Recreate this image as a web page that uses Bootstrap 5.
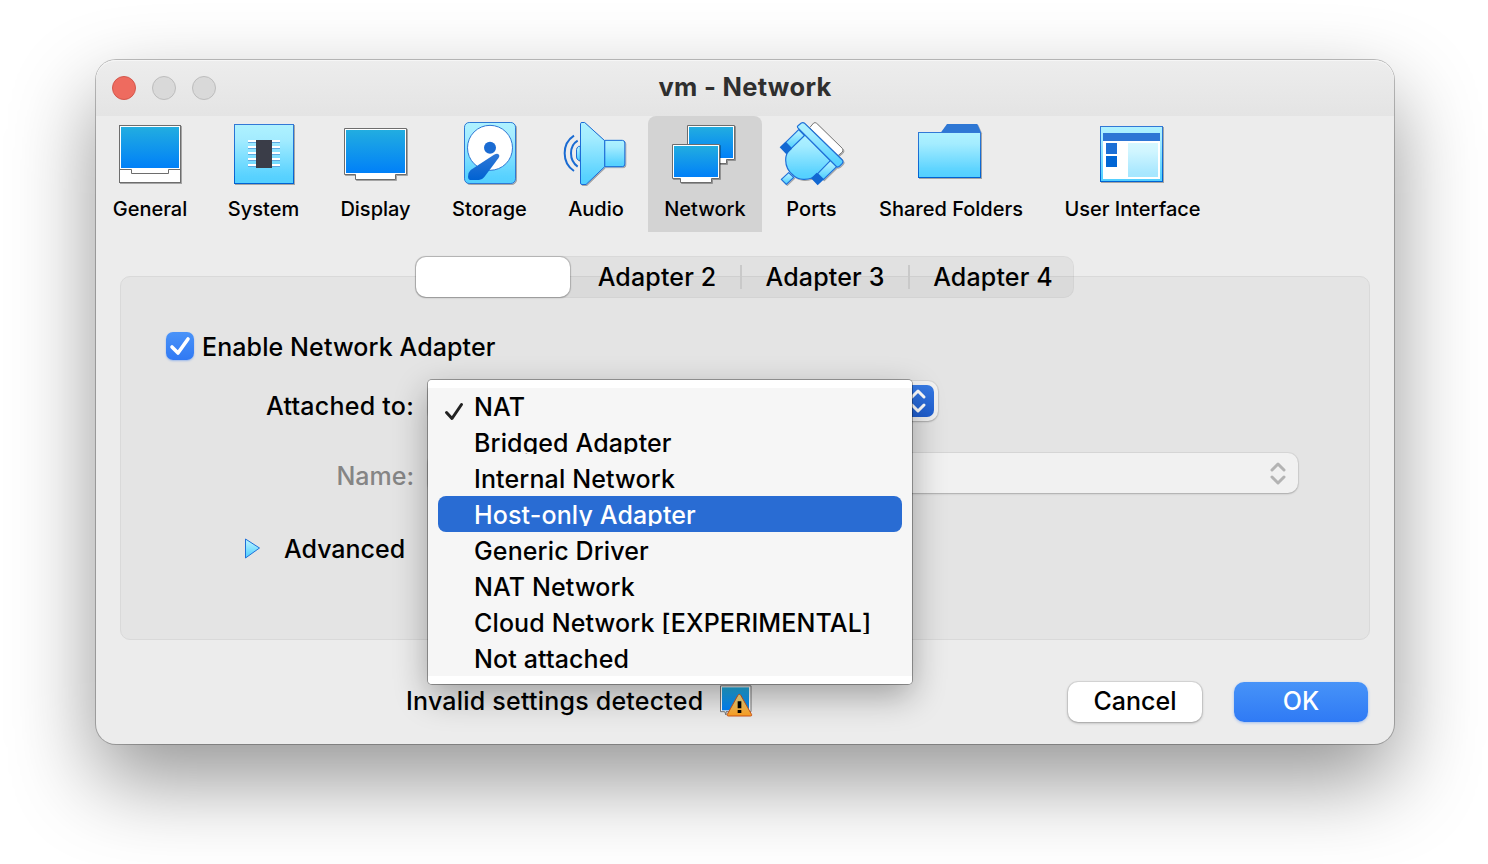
<!DOCTYPE html>
<html lang="en">
<head>
<meta charset="utf-8">
<meta name="viewport" content="width=device-width, initial-scale=1">
<title>vm - Network</title>
<link href="https://cdn.jsdelivr.net/npm/bootstrap@5.3.0/dist/css/bootstrap.min.css" rel="stylesheet">
<style>
  body { font-family: Inter, "Liberation Sans", sans-serif; font-size: 25px; font-weight: 500; line-height: 36px; color: #000; background: #fff; height: 864px; overflow: hidden; padding: 60px 94px 0 96px; }
  svg { display: block; overflow: visible; }
  .win { height: 684px; border-radius: 20px; background: #ececec; box-shadow: 0 0 0 1px rgba(0,0,0,.24), 0 36px 84px rgba(0,0,0,.42); }
  .titlebar { height: 56px; border-radius: 20px 20px 0 0; background: linear-gradient(#ededed, #e4e4e4); box-shadow: inset 0 1px 0 #f6f6f6; padding-left: 16px; }
  .lights { gap: 16px; }
  .light { width: 24px; height: 24px; border-radius: 50%; background: #d9d9d9; border: 1px solid #bdbdbd; }
  .light.close-dot { background: #ee6b5f; border-color: #d3574c; }
  .win-title { color: #2f2f2f; font-weight: 700; font-size: 25.500px; letter-spacing: .3px; line-height: 54px; }
  .tools { display: grid; grid-template-columns: 108px 105px 105px 109px 90px 114px 85px 180px 169px; column-gap: 7px; height: 116px; font-size: 20px; line-height: 26px; }
  .tool { padding-top: 6px; border-radius: 8px 8px 0 0; white-space: nowrap; }
  .tool.active { background: #d3d3d3; }
  .tool span { margin-top: 10px; }
  .pane-wrap { padding: 24px 24px 0; }
  .tabs { width: 659px; height: 42px; margin-bottom: -22px; margin-left: 295px; z-index: 2; border-radius: 10px; background: rgba(0,0,0,.045); box-shadow: inset 0 0 0 1px rgba(0,0,0,.03); line-height: 42px; letter-spacing: .15px; }
  .tab-on { width: 154px; height: 40px; border-radius: 10px; background: #fff; margin: 1px 3px 1px 1px; box-shadow: 0 0 1px 1px rgba(0,0,0,.18), 0 1px 2px rgba(0,0,0,.15); }
  .tab-on, .tab-off { flex: none; }
  .tab-off { width: 168px; position: relative; }
  .tab-off + .tab-off::before { content: ""; position: absolute; left: -1px; top: 9px; width: 2px; height: 24px; background: #c9c9c9; }
  .pane { height: 364px; border: 1px solid #d9d9d9; border-radius: 10px; background: #e4e4e4; padding: 52px 71px 0 45px; }
  .tick { width: 28px; height: 28px; border-radius: 7px; background: linear-gradient(#4a93f8, #3079f4); box-shadow: 0 1px 2px rgba(48,121,244,.4); margin-top: 3px; }
  .enable-text { letter-spacing: .1px; }
  .row-attached { margin-top: 23px; letter-spacing: .25px; }
  .row-name { margin-top: 34px; }
  .row-advanced { margin-top: 37px; padding-left: 78px; gap: 22px; }
  .lbl { width: 248px; }
  .dimmed { color: #858585; }
  .combo { height: 40px; border-radius: 10px; background: #f1f1f1; box-shadow: 0 0 0 1px rgba(0,0,0,.05), 0 1px 2px rgba(0,0,0,.22); margin: -5px 0 0 14px; }
  .combo-short { width: 510px; padding: 4px; margin-top: -7px; }
  .knob { width: 32px; height: 32px; border-radius: 7px; background: linear-gradient(#3579e4, #1f5ed0); }
  .menu { left: 428px; top: 380px; width: 484px; height: 304px; border-radius: 4px; padding: 8px 10px; z-index: 10; background: linear-gradient(#fff 8px, #f6f6f6 8px, #f6f6f6 296px, #fff 296px); box-shadow: 0 0 0 1px rgba(0,0,0,.33), 0 12px 34px rgba(0,0,0,.32); letter-spacing: .13px; }
  .opt { height: 36px; padding-left: 36px; border-radius: 8px; position: relative; white-space: nowrap; }
  .opt span { display: block; line-height: 38px; }
  .opt .cut { height: 30px; overflow: hidden; }
  .opt.picked { background: #296cd3; color: #fff; }
  .opt svg { position: absolute; left: 6px; top: 13px; }
  .foot { padding: 42px 26px 0 310px; }
  .foot-note { line-height: 38px; width: 297px; margin-right: 17px; letter-spacing: .22px; }
  .warn-icon { margin-top: 3px; }
  .mac-btn { width: 134px; height: 40px; border-radius: 10px; background: #fff; line-height: 38px; text-align: center; box-shadow: 0 0 0 1px rgba(0,0,0,.07), 0 1px 3px rgba(0,0,0,.3); }
  .mac-btn.ok { background: linear-gradient(#4793f8, #2f7af5); color: #fff; box-shadow: 0 1px 3px rgba(48,121,244,.4); margin-left: 32px; }
</style>
</head>
<body>
<svg width="0" height="0" class="position-absolute">
  <defs>
    <linearGradient id="scr" x1="0" y1="0" x2="0" y2="1"><stop offset="0" stop-color="#22ade0"/><stop offset="1" stop-color="#0080f8"/></linearGradient>
    <linearGradient id="sky" x1="0" y1="0" x2="0" y2="1"><stop offset="0" stop-color="#aff2ff"/><stop offset=".25" stop-color="#a4ecff"/><stop offset=".85" stop-color="#5bd3ff"/><stop offset="1" stop-color="#52cfff"/></linearGradient>
    <linearGradient id="deep" x1="0" y1="0" x2="0" y2="1"><stop offset="0" stop-color="#3078d6"/><stop offset="1" stop-color="#0062d2"/></linearGradient>
    <linearGradient id="warn" x1="0" y1="0" x2="0" y2="1"><stop offset="0" stop-color="#f3e08c"/><stop offset="1" stop-color="#ffa021"/></linearGradient>
    <filter id="drop" x="-20%" y="-20%" width="140%" height="140%"><feDropShadow dx="3" dy="3" stdDeviation=".6" flood-color="#000" flood-opacity=".3"/></filter>
  </defs>
</svg>

<div class="win">
  <div class="titlebar d-flex align-items-center position-relative">
    <div class="lights d-flex"><i class="light close-dot"></i><i class="light"></i><i class="light"></i></div>
    <div class="win-title position-absolute top-0 start-0 w-100 text-center">vm - Network</div>
  </div>

  <div class="tools">
    <div class="tool d-flex flex-column align-items-center">
      <svg width="64" height="64" viewBox="84 216 192 192"><g filter="url(#drop)"><rect x="88.5" y="226.500" width="183" height="171" fill="#fff" stroke="#6d6d6d" stroke-width="3"/></g><rect x="93" y="231" width="174" height="123" fill="url(#scr)"/><path d="M88 358.500H124.500V370.500H235.500V358.500H272" fill="none" stroke="#6d6d6d" stroke-width="3"/></svg>
      <span>General</span>
    </div>
    <div class="tool d-flex flex-column align-items-center">
      <svg width="65" height="64" viewBox="423 216 195 192"><g filter="url(#drop)"><rect x="433.500" y="223.500" width="177" height="177" fill="url(#sky)" stroke="url(#deep)" stroke-width="3"/></g><g fill="#5fa9e0"><path d="M474 276h96v3h-96zM474 294h96v3h-96zM474 312h96v3h-96zM474 330h96v3h-96zM474 348h96v3h-96z"/></g><path fill="#fff" d="M474 270h96v6h-96zM474 288h96v6h-96zM474 306h96v6h-96zM474 324h96v6h-96zM474 342h96v6h-96z"/><rect x="498" y="270" width="48" height="84" fill="#3a3d48"/></svg>
      <span>System</span>
    </div>
    <div class="tool d-flex flex-column align-items-center">
      <svg width="65" height="64" viewBox="759 216 195 192"><g filter="url(#drop)"><path d="M763.500 235.500H949.500V373.500H916.500V388.500H796.500V373.500H763.500Z" fill="#fff" stroke="#6d6d6d" stroke-width="3"/></g><rect x="768" y="240" width="177" height="129" fill="url(#scr)"/></svg>
      <span>Display</span>
    </div>
    <div class="tool d-flex flex-column align-items-center">
      <svg width="65" height="64" viewBox="81 36 195 192"><g filter="url(#drop)"><rect x="103.500" y="37.500" width="153" height="183" rx="14" fill="url(#sky)" stroke="#2f78d4" stroke-width="3"/></g><circle cx="180" cy="113.500" r="67.500" fill="#fff" stroke="#2f78d4" stroke-width="3"/><circle cx="180" cy="113.500" r="18" fill="#1a6bd2"/><path d="M192 134Q206 128 208 137Q208 141 205 145L163 201Q156 210 147 210H124Q114 210 114 200Q114 187 122 180Z" fill="url(#deep)"/></svg>
      <span>Storage</span>
    </div>
    <div class="tool d-flex flex-column align-items-center">
      <svg width="64" height="64" viewBox="402 36 192 192"><g filter="url(#drop)" stroke="#1a6bd6" stroke-width="3" fill="url(#sky)"><path d="M451 109H446Q439.500 113 439.500 119V141Q439.500 148 446 151H451Z"/><path d="M524 91H577Q584.500 91 584.500 99V162Q584.500 170 577 170H524Z"/><path d="M451.500 41Q451.500 37.500 456 37.500H464L524 92V170L468 223.500H456Q451.500 223.500 451.500 219Z"/></g><path d="M432 77Q404 95 404 130T432 183M443 92Q423 104 423 130T443 170" fill="none" stroke="#1a6bd2" stroke-width="6"/></svg>
      <span>Audio</span>
    </div>
    <div class="tool active d-flex flex-column align-items-center">
      <svg width="66" height="64" viewBox="81 36 198 192"><g filter="url(#drop)"><path d="M127.500 46.500H268.500V148.500H244.500V160.500H160V148.500H127.500Z" fill="#fff" stroke="#6d6d6d" stroke-width="3"/></g><rect x="132" y="51" width="132" height="93" fill="url(#scr)"/><g filter="url(#drop)"><path d="M82.500 103.500H223.500V205.500H199.500V217.500H106.500V205.500H82.500Z" fill="#fff" stroke="#6d6d6d" stroke-width="3"/></g><rect x="87" y="108" width="132" height="93" fill="url(#scr)"/></svg>
      <span>Network</span>
    </div>
    <div class="tool d-flex flex-column align-items-center">
      <svg width="65" height="64" viewBox="402 36 195 192"><g filter="url(#drop)" stroke-width="3" stroke-linejoin="round"><path d="M494 53L506 39Q510 36 515 40L592 115Q596 120 592 126L579 137Z" fill="#fff" stroke="#777"/><g stroke="#1f70d8" stroke-width="3.600" fill="url(#sky)"><path d="M461 59L480 78L441 117L422 97Z"/><path d="M555 150L575 170L535 209L516 189Z"/><path d="M480 75L556 152L515 194Q500 209 475 208Q457 207 445 196Q422 178 422 150Q422 130 435 119Z"/><path d="M431 188L446 202L424 223L409 208Z"/><path d="M458 53Q456 50 459 47L469 39Q474 36 479 40L592 150Q596 155 592 160L583 169Q578 173 574 169Z"/></g></g><path d="M404 112L421 95L441 116L424 133ZM498 205L515 188L537 208L518 226Z" fill="#1268d2"/></svg>
      <span>Ports</span>
    </div>
    <div class="tool d-flex flex-column align-items-center">
      <svg width="66" height="64" viewBox="159 36 198 192"><g filter="url(#drop)"><path d="M228 67L246 42H337L348 67V75H228Z" fill="#2f77d4"/><rect x="160.500" y="67.500" width="186" height="135" fill="url(#sky)" stroke="url(#deep)" stroke-width="3"/></g></svg>
      <span>Shared Folders</span>
    </div>
    <div class="tool d-flex flex-column align-items-center">
      <svg width="65" height="64" viewBox="705 36 195 192"><g filter="url(#drop)"><rect x="706.500" y="49.500" width="186" height="165" fill="url(#sky)" stroke="url(#deep)" stroke-width="3"/></g><rect x="714" y="69" width="171" height="138" fill="#fff"/><rect x="714" y="69" width="171" height="24" fill="#2d76d5"/><rect x="723" y="99" width="33" height="33" fill="#1c6fd5"/><rect x="723" y="138" width="33" height="33" fill="#0065d4"/><rect x="789" y="99" width="90" height="102" fill="url(#sky)" opacity=".52"/></svg>
      <span>User Interface</span>
    </div>
  </div>

  <div class="pane-wrap">
    <div class="tabs d-flex position-relative text-center">
      <div class="tab-on"></div>
      <div class="tab-off">Adapter 2</div>
      <div class="tab-off">Adapter 3</div>
      <div class="tab-off">Adapter 4</div>
    </div>
    <div class="pane">
      <div class="d-flex gap-2">
        <div class="tick"><svg width="28" height="28" viewBox="0 0 28 28"><path d="M6 15L12 21L22 7" fill="none" stroke="#fff" stroke-width="3.600" stroke-linecap="round" stroke-linejoin="round"/></svg></div>
        <span class="enable-text">Enable Network Adapter</span>
      </div>
      <div class="row-attached d-flex">
        <div class="lbl text-end">Attached to:</div>
        <div class="combo combo-short d-flex justify-content-end">
          <div class="knob"><svg width="32" height="32" viewBox="0 0 32 32"><path d="M10 12L16 6L22 12M10 20L16 26L22 20" fill="none" stroke="#fff" stroke-width="3" stroke-linecap="round" stroke-linejoin="round"/></svg></div>
        </div>
      </div>
      <div class="row-name d-flex">
        <div class="lbl dimmed text-end">Name:</div>
        <div class="combo flex-grow-1 d-flex justify-content-end">
          <svg width="40" height="40" viewBox="0 0 40 40"><path d="M14 17L20 11L26 17M14 24L20 30L26 24" fill="none" stroke="#b3b3b3" stroke-width="3" stroke-linecap="round" stroke-linejoin="round"/></svg>
        </div>
      </div>
      <div class="row-advanced d-flex align-items-center">
        <svg width="18" height="22" viewBox="0 0 18 22"><path d="M1.500 1L15.500 10L1.500 20Z" fill="url(#sky)" stroke="#1f70d8" stroke-linejoin="round"/></svg>
        <span>Advanced</span>
      </div>
    </div>
  </div>

  <div class="foot d-flex">
    <span class="foot-note text-nowrap">Invalid settings detected</span>
    <svg class="warn-icon" width="33" height="33" viewBox="60 944 99 99"><path d="M61.500 946.500H153V1024H78V1034L74 1024H61.500Z" fill="#fff" stroke="#777" stroke-width="3"/><rect x="66" y="951" width="81" height="69" fill="url(#scr)"/><path d="M118 972Q121 972 123 976L155 1033Q156 1037 152 1037H85Q80 1037 82 1032L113 976Q115 972 118 972Z" fill="url(#warn)" stroke="#d0561a" stroke-width="3"/><path d="M113 993H124V1014H113ZM113 1019H124V1028H113Z" fill="#000"/></svg>
    <div class="mac-btn ms-auto">Cancel</div>
    <div class="mac-btn ok">OK</div>
  </div>
</div>

<div class="menu position-absolute">
  <div class="opt"><svg width="22" height="22" viewBox="0 0 22 22"><path d="M2.500 11.500L8 17.500L17.500 3.500" fill="none" stroke="#222" stroke-width="3" stroke-linecap="round" stroke-linejoin="round"/></svg><span>NAT</span></div>
  <div class="opt"><span class="cut">Bridged Adapter</span></div>
  <div class="opt"><span>Internal Network</span></div>
  <div class="opt picked"><span class="cut">Host-only Adapter</span></div>
  <div class="opt"><span>Generic Driver</span></div>
  <div class="opt"><span>NAT Network</span></div>
  <div class="opt"><span class="cut">Cloud Network [EXPERIMENTAL]</span></div>
  <div class="opt"><span>Not attached</span></div>
</div>
<script src="https://cdn.jsdelivr.net/npm/bootstrap@5.3.0/dist/js/bootstrap.bundle.min.js"></script>
</body>
</html>
